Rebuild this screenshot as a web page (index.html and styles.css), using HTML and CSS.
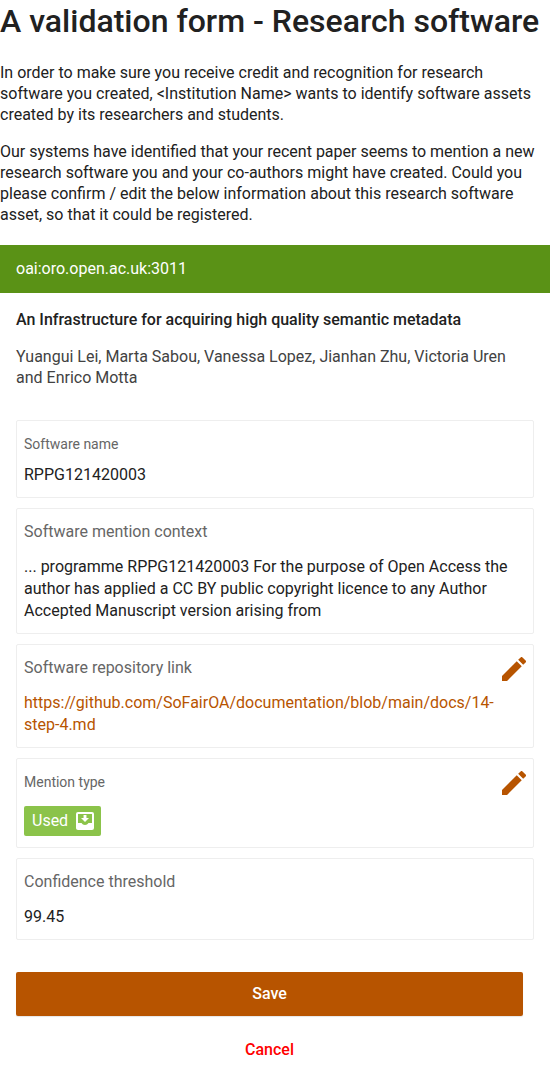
FILE: index.html
```html
<!DOCTYPE html>
<html lang="en">
<head>
<meta charset="utf-8">
<meta name="viewport" content="width=device-width, initial-scale=1">
<title>A validation form - Research software</title>
<link rel="stylesheet" href="styles.css">
</head>
<body>
<main class="page">
  <h1 class="title">A validation form - Research software</h1>
  <p class="intro">In order to make sure you receive credit and recognition for research software you created, &lt;Institution Name&gt; wants to identify software assets created by its researchers and students.</p>
  <p class="intro">Our systems have identified that your recent paper seems to mention a new research software you and your co-authors might have created. Could you please confirm / edit the below information about this research software asset, so that it could be registered.</p>
  <div class="banner">oai:oro.open.ac.uk:3011</div>
  <form class="form">
    <h2 class="paper">An Infrastructure for acquiring high quality semantic metadata</h2>
    <p class="authors">Yuangui Lei, Marta Sabou, Vanessa Lopez, Jianhan Zhu, Victoria Uren and Enrico Motta</p>
    <div class="cards">
      <section class="card">
        <h3 class="label label-small">Software name</h3>
        <p class="value">RPPG121420003</p>
      </section>
      <section class="card">
        <h3 class="label">Software mention context</h3>
        <p class="value">... programme RPPG121420003 For the purpose of Open Access the author has applied a CC BY public copyright licence to any Author Accepted Manuscript version arising from</p>
      </section>
      <section class="card">
        <div class="card-head">
          <h3 class="label">Software repository link</h3>
          <button class="edit" type="button" aria-label="Edit repository link"><svg class="pencil" viewBox="3 3 18 18" aria-hidden="true"><path d="M3 17.250V21h3.750L17.810 9.940l-3.750-3.750zM20.710 7.040a1 1 0 0 0 0-1.410l-2.340-2.340a1 1 0 0 0-1.410 0l-1.830 1.830 3.750 3.750z"/></svg></button>
        </div>
        <a class="value link" href="https://github.com/SoFairOA/documentation/blob/main/docs/14-step-4.md">https://github.com/SoFairOA/documentation/blob/main/docs/14-step-4.md</a>
      </section>
      <section class="card">
        <div class="card-head">
          <h3 class="label label-small">Mention type</h3>
          <button class="edit" type="button" aria-label="Edit mention type"><svg class="pencil" viewBox="3 3 18 18" aria-hidden="true"><path d="M3 17.250V21h3.750L17.810 9.940l-3.750-3.750zM20.710 7.040a1 1 0 0 0 0-1.410l-2.340-2.340a1 1 0 0 0-1.410 0l-1.830 1.830 3.750 3.750z"/></svg></button>
        </div>
        <div class="tags">
          <span class="tag">Used <svg class="tag-icon" viewBox="3 3 18 18" aria-hidden="true"><path d="M16 9h-2.550V6h-2.900v3H8l4 4zM19 3H5a2 2 0 0 0-2 2v14c0 1.100.9 2 2 2h14a2 2 0 0 0 2-2V5a2 2 0 0 0-2-2zm0 11h-3.560c-.69 1.190-1.970 2-3.450 2s-2.750-.81-3.450-2H5V5h14z"/></svg></span>
        </div>
      </section>
      <section class="card">
        <h3 class="label">Confidence threshold</h3>
        <p class="value">99.45</p>
      </section>
    </div>
    <div class="actions">
      <button class="save" type="submit">Save</button>
      <button class="cancel" type="button">Cancel</button>
    </div>
  </form>
</main>
</body>
</html>
```
FILE: styles.css
```css
* { box-sizing: border-box; }
body {
  margin: 0;
  background: #fff;
  color: #212121;
  font: 16px/21px Roboto, sans-serif;
}
h1, h2, h3, p { margin: 0; }
.title {
  margin-bottom: 20px;
  font-size: 32px;
  font-weight: 500;
  line-height: 42px;
}
.intro {
  margin-bottom: 16px;
  padding-right: 8px;
}
.banner {
  margin-top: 20px;
  padding: 12px 16px;
  background: #5a9216;
  color: #fff;
  line-height: 24px;
}
.form { padding: 16px; }
.paper {
  margin-bottom: 16px;
  font-size: 16px;
  font-weight: 500;
}
.authors {
  margin-bottom: 32px;
  color: #424242;
}
.cards {
  display: flex;
  flex-direction: column;
  gap: 10px;
}
.card {
  padding: 12px 7px 11px;
  border: 1px solid #eee;
  border-radius: 2px;
}
.label {
  margin-bottom: 13px;
  color: #666;
  font-size: 16px;
  font-weight: 400;
  line-height: 22px;
}
.label-small {
  margin-bottom: 9px;
  font-size: 14px;
}
.value { line-height: 22px; }
.card-head {
  display: flex;
  justify-content: space-between;
  margin-bottom: 11px;
}
.card-head .label { margin-bottom: 0; }
.edit {
  width: 24px;
  height: 24px;
  padding: 0;
  border: 0;
  background: none;
}
.pencil {
  display: block;
  width: 24px;
  height: 24px;
  fill: #b75400;
}
.link {
  display: block;
  color: #b75400;
  text-decoration: none;
}
.tags { display: flex; }
.tag {
  display: inline-flex;
  align-items: center;
  gap: 8px;
  padding: 4px 7px 4px 8px;
  border-radius: 2px;
  background: #8bc34a;
  color: #fff;
  line-height: 22px;
}
.tag-icon {
  width: 18px;
  height: 18px;
  fill: #fff;
}
.actions {
  display: flex;
  flex-direction: column;
  gap: 12px;
  margin: 32px 11px 0 0;
}
.save, .cancel {
  height: 44px;
  border: 0;
  border-radius: 2px;
  font: 500 16px/22px Roboto, sans-serif;
}
.save {
  background: #b75400;
  box-shadow: 0 1px 1px rgba(0, 0, 0, 0.1);
  color: #fff;
}
.cancel {
  background: none;
  color: #f00;
}
```
